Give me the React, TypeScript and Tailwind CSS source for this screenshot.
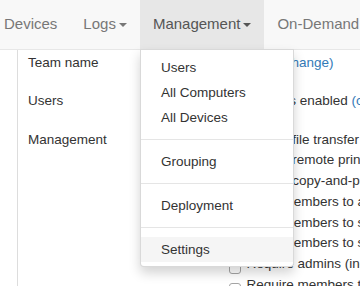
import React from "react";

const caret = (
  <span className="inline-block w-0 h-0 ml-[3px] border-x-[4px] border-x-transparent border-t-[4px] border-t-current align-middle" />
);

const options = [
  "Enable file transfer",
  "Enable remote printing",
  "Enable copy-and-paste",
  "Allow members to add devices",
  "Allow members to share files",
  "Allow members to see other members",
  "Require admins (including you) to use 2FA",
  "Require members to use 2FA",
];

const menu: (string | null)[] = [
  "Users",
  "All Computers",
  "All Devices",
  null,
  "Grouping",
  null,
  "Deployment",
  null,
  "Settings",
];

const App = () => {
  return (
    <div className="w-[360px] h-[286px] overflow-hidden bg-white whitespace-nowrap font-['Liberation_Sans',Arial,sans-serif] text-[13.5px] text-[#333]">
      {/* NAVBAR */}
      <div className="relative z-10 h-[50px] bg-[#f8f8f8] border-b border-[#e7e7e7]">
        <div className="flex h-full ml-[-9px] text-[15px] text-[#777]">
          <div className="h-full flex items-center px-[13px]">Devices</div>
          <div className="h-full flex items-center px-[13px]">
            Logs
            {caret}
          </div>
          <div className="relative h-full flex items-center px-[13px] bg-[#e7e7e7] text-[#555]">
            Management
            {caret}
            {/* DROPDOWN */}
            <div className="absolute left-0 top-full w-[154px] bg-white border border-[rgba(0,0,0,0.15)] rounded-b-[4px] shadow-[0_6px_12px_rgba(0,0,0,0.175)] pt-[5px] pb-[4px] text-[13.5px] text-[#333]">
              {menu.map((item, i) =>
                item === null ? (
                  <div key={i} className="h-px my-[9px] bg-[#e5e5e5]" />
                ) : (
                  <div
                    key={i}
                    className={
                      item === "Settings"
                        ? "h-[25px] leading-[25px] px-[20px] bg-[#f5f5f5]"
                        : "h-[25px] leading-[25px] px-[20px]"
                    }
                  >
                    {item}
                  </div>
                )
              )}
            </div>
          </div>
          <div className="h-full flex items-center px-[13px]">On-Demand</div>
        </div>
      </div>

      {/* CONTENT */}
      <div className="flex h-[236px]">
        <div className="w-[17px] shrink-0" />
        <div className="flex-1 border-l border-[#ddd] pl-[10px] pt-[3px]">
          <div className="flex leading-[20px] mb-[18px]">
            <div className="w-[200.5px] shrink-0">Team name</div>
            <div>
              Finance <span className="text-[#337ab7]">(change)</span>
            </div>
          </div>
          <div className="flex leading-[20px] mb-[18.5px]">
            <div className="w-[200.5px] shrink-0">Users</div>
            <div>
              3 members enabled <span className="text-[#337ab7]">(change)</span>
            </div>
          </div>
          <div className="flex">
            <div className="w-[200.5px] shrink-0 leading-[20px]">Management</div>
            <div className="flex flex-col">
              {options.map((o) => (
                <div key={o} className="flex items-start h-[20.8px] leading-[20px]">
                  <span className="w-[12px] h-[12px] mt-[7.5px] shrink-0 border border-[#a5a5a5] rounded-[3px] bg-white" />
                  <span className="ml-[6px]">{o}</span>
                </div>
              ))}
            </div>
          </div>
        </div>
      </div>
    </div>
  );
};

export default App;
